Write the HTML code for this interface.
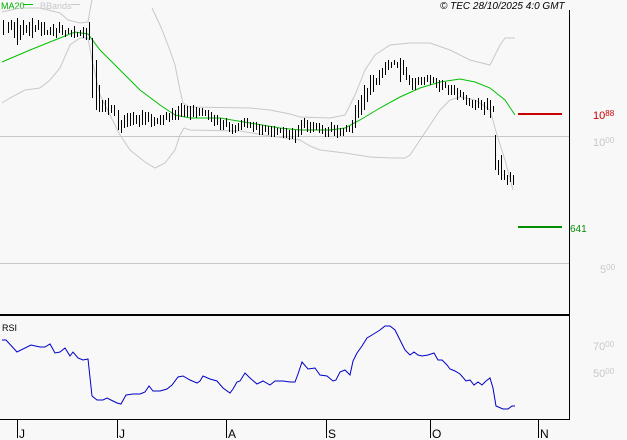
<!DOCTYPE html>
<html><head><meta charset="utf-8"><style>
html,body{margin:0;padding:0;background:#f8f8f8}
svg{display:block;font-family:"Liberation Sans",sans-serif}
</style></head><body>
<svg width="627" height="440" viewBox="0 0 627 440" xmlns="http://www.w3.org/2000/svg">
<rect width="627" height="440" fill="#f8f8f8"/>
<line x1="0" y1="136.5" x2="569" y2="136.5" stroke="#c8c8c8"/>
<line x1="0" y1="263.5" x2="569" y2="263.5" stroke="#c8c8c8"/>
<line x1="569.5" y1="10" x2="569.5" y2="420" stroke="#000"/>
<line x1="0" y1="315" x2="570" y2="315" stroke="#000" stroke-width="2"/>
<line x1="0" y1="419.5" x2="570" y2="419.5" stroke="#000"/>
<g stroke="#000">
<line x1="17.5" y1="420" x2="17.5" y2="438"/><line x1="117.5" y1="420" x2="117.5" y2="438"/>
<line x1="226.5" y1="420" x2="226.5" y2="438"/><line x1="326.5" y1="420" x2="326.5" y2="438"/>
<line x1="430.5" y1="420" x2="430.5" y2="438"/><line x1="538.5" y1="420" x2="538.5" y2="438"/>
</g>
<g font-size="12" fill="#000">
<text x="19" y="438">J</text><text x="119" y="438">J</text><text x="228" y="438">A</text>
<text x="328" y="438">S</text><text x="432" y="438">O</text><text x="540" y="438">N</text>
</g>
<text x="1" y="9" font-size="9" fill="#00b000">MA20</text>
<line x1="23" y1="4.5" x2="33" y2="4.5" stroke="#00c000"/>
<text x="40" y="9" font-size="9" fill="#c8c8c8">BBands</text>
<line x1="71" y1="4.5" x2="80" y2="4.5" stroke="#c8c8c8"/>
<text x="440" y="9" font-size="10" font-style="italic" fill="#000">© TEC 28/10/2025 4:0 GMT</text>
<text x="2" y="331" font-size="9" fill="#000">RSI</text>
<g fill="#c8c8c8">
<text x="593" y="146" font-size="11">10<tspan font-size="8" dy="-3">00</tspan></text>
<text x="600" y="273" font-size="11">5<tspan font-size="8" dy="-3">00</tspan></text>
<text x="593" y="350" font-size="11">70<tspan font-size="8" dy="-3">00</tspan></text>
<text x="593" y="377" font-size="11">50<tspan font-size="8" dy="-3">00</tspan></text>
</g>
<line x1="518" y1="114" x2="562" y2="114" stroke="#c80000" stroke-width="2"/>
<text x="593" y="119" font-size="11" fill="#c80000">10<tspan font-size="8" dy="-3">88</tspan></text>
<line x1="518" y1="227" x2="562" y2="227" stroke="#009000" stroke-width="2"/>
<text x="570" y="232" font-size="10" fill="#009000">641</text>
<g fill="none" stroke="#c8c8c8">
<polyline points="2,12 20,8 40,8 60,13 68,20 80,23 88,22 90,10 92,0"/>
<polyline points="152,8 160,25 168,45 175,65 180,90 183,103 190,107 250,108 270,110 290,114 300,117 330,118 345,115 355,95 365,70 375,55 390,45 410,43 430,43 450,50 470,60 490,65 500,45 505,38 515,38"/>
<polyline points="2,103 10,98 25,90 40,88 50,80 60,68 70,45 80,38 88,38 92,60 100,95 110,115 120,135 130,150 145,162 155,168 165,163 175,150 180,135 184,128 190,130 240,131 270,136 300,140 310,146 320,150 345,153 370,157 390,158 405,158 410,155 420,140 430,125 440,110 450,100 460,97 475,100 490,110 497,135 505,160 513,190"/>
</g>
<polyline fill="none" stroke="#00c000" points="2,62 30,50 60,38 75,32 88,34 100,50 120,70 140,90 160,105 175,115 190,118 220,118 250,123 280,128 300,130 330,130 345,128 360,120 380,108 400,97 420,88 440,82 460,79 475,82 490,88 505,100 515,115"/>
<path stroke="#000" fill="none" d="M3.5 20V35M8.5 22V33M11.5 20V30M14.5 22V38M17.5 18V45M20.5 25V40M23.5 20V35M26.5 25V33M29.5 22V36M32.5 18V38M35.5 25V32M38.5 20V30M41.5 22V36M44.5 22V35M47.5 30V35M50.5 27V35M53.5 24V36M56.5 28V38M59.5 22V33M62.5 25V35M65.5 30V37M68.5 28V34M71.5 30V37M74.5 26V38M77.5 32V37M80.5 30V36M83.5 27V38M86.5 28V40M89.5 22V40M92.5 38V98M96.5 60V110M99.5 85V112M102.5 100V112M105.5 100V112M108.5 98V115M111.5 105V113M114.5 105V116M118.5 110V130M121.5 120V133M124.5 115V128M127.5 113V127M130.5 113V126M133.5 112V125M136.5 115V124M139.5 115V127M142.5 110V125M145.5 112V125M148.5 112V122M151.5 114V127M154.5 117V126M157.5 118V124M160.5 115V125M163.5 115V125M166.5 112V120M169.5 113V122M172.5 108V120M175.5 110V120M178.5 106V120M181.5 103V117M184.5 105V117M187.5 106V117M190.5 106V120M193.5 105V117M196.5 107V118M199.5 108V116M202.5 108V116M205.5 110V116M208.5 110V120M211.5 112V122M214.5 115V126M217.5 115V125M220.5 118V130M223.5 120V130M226.5 118V127M229.5 122V132M232.5 124V134M235.5 125V133M238.5 123V131M241.5 120V130M244.5 118V127M247.5 118V128M250.5 122V128M253.5 122V132M256.5 122V130M259.5 124V135M262.5 125V135M265.5 125V132M268.5 126V135M271.5 126V137M274.5 126V137M277.5 128V135M280.5 128V133M283.5 127V138M286.5 128V138M289.5 130V140M292.5 128V139M295.5 130V143M298.5 125V137M301.5 120V135M304.5 118V128M307.5 120V132M310.5 122V133M313.5 122V132M316.5 123V130M319.5 123V133M322.5 125V134M325.5 128V137M328.5 127V137M331.5 122V132M334.5 125V136M337.5 125V138M340.5 128V136M343.5 128V136M346.5 125V132M349.5 126V132M352.5 120V133M355.5 105V128M358.5 100V118M361.5 95V115M364.5 85V110M367.5 88V102M370.5 75V95M373.5 75V92M376.5 78V85M379.5 70V85M382.5 68V78M385.5 62V75M388.5 60V70M391.5 62V68M394.5 60V65M397.5 62V68M400.5 58V82M403.5 60V75M406.5 67V80M409.5 75V85M412.5 78V90M415.5 78V90M418.5 77V85M421.5 77V85M424.5 77V85M427.5 75V82M430.5 75V85M433.5 77V83M436.5 78V88M439.5 80V92M442.5 80V90M445.5 82V88M448.5 85V95M451.5 85V95M454.5 85V95M457.5 88V100M460.5 90V97M463.5 92V100M466.5 95V105M469.5 98V106M472.5 100V108M475.5 100V110M478.5 98V108M481.5 100V110M484.5 102V115M487.5 98V110M490.5 100V118M493.5 106V112M495.5 135V170M498.5 160V175M501.5 155V180M504.5 170V180M507.5 175V185M510.5 172V182M513.5 175V185"/>
<polyline fill="none" stroke="#0000c8" points="2,340 6,340 17,352 31,345 40,347 45,347 50,344 55,353 60,352 65,348 70,356 73,352 78,358 83,360 88,359 92,396 97,400 103,400 107,398 113,401 117,403 121,404 126,395 133,394 140,394 145,392 149,386 153,391 160,391 167,389 172,385 178,377 183,376 190,380 197,383 200,381 203,376 210,379 217,381 223,388 230,393 233,389 237,382 240,381 245,373 250,378 257,384 263,381 270,385 275,381 283,381 290,382 295,382 298,374 302,362 308,369 315,368 320,375 327,376 333,381 336,380 340,372 345,370 350,375 353,361 357,353 362,346 367,338 372,335 380,330 385,326 390,326 395,330 400,340 405,350 410,355 414,352 418,355 422,356 428,355 434,353 438,360 442,360 447,365 450,369 455,371 460,374 466,381 470,380 474,385 478,382 482,385 486,381 490,378 493,388 496,406 503,409 508,409 512,406 515,406"/>
</svg>
</body></html>
